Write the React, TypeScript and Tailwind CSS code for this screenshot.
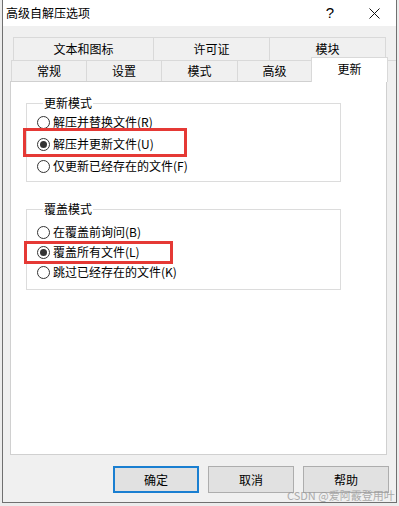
import React from "react";

const font = { fontFamily: '"Noto Sans CJK SC", "Noto Sans", sans-serif' };

function Radio({ label, checked, h }: { label: string; checked?: boolean; h: string }) {
  return (
    <div className={`flex items-center ${h}`}>
      <span className="w-[13px] h-[13px] rounded-full border border-[#333333] bg-white flex items-center justify-center">
        {checked && <span className="w-[7px] h-[7px] rounded-full bg-[#333333]" />}
      </span>
      <span className="ml-[3px] text-[12px] leading-[16px] text-black">{label}</span>
    </div>
  );
}

export default function App() {
  return (
    <div className="relative w-[399px] h-[506px] bg-[#ececec] overflow-hidden" style={font}>
      <div className="ml-[2px] w-[395px] h-[503px] border-x border-b border-[#707070] bg-[#f0f0f0] flex flex-col">
        {/* Title bar */}
        <div className="h-[26px] bg-white flex items-center pl-[3px] text-[12px] leading-[16px] text-black">
          <span>高级自解压选项</span>
          <span className="ml-auto text-[15px] leading-[18px] mr-[35px]" style={{ fontFamily: '"Liberation Sans", sans-serif' }}>?</span>
          <svg width="11" height="11" viewBox="0 0 11 11" className="mr-[16px]">
            <path d="M0.5 0.5 L10.5 10.5 M10.5 0.5 L0.5 10.5" stroke="#111" strokeWidth="1" />
          </svg>
        </div>

        {/* Tabs */}
        <div className="pt-[11px] text-[12px] leading-[16px] text-black">
          <div className="flex ml-[10px] h-[23px]">
            <div className="w-[140px] border-l border-t border-[#d9d9d9] flex items-center justify-center">文本和图标</div>
            <div className="w-[116px] border-l border-t border-[#d9d9d9] flex items-center justify-center">许可证</div>
            <div className="w-[117px] border-l border-t border-r border-[#d9d9d9] flex items-center justify-center">模块</div>
          </div>
          <div className="flex items-end ml-[8px] h-[21px] border-t border-[#d9d9d9]">
            <div className="w-[75px] h-[20px] border-l border-[#d9d9d9] flex items-center justify-center">常规</div>
            <div className="w-[75px] h-[20px] border-l border-[#d9d9d9] flex items-center justify-center">设置</div>
            <div className="w-[76px] h-[20px] border-l border-[#d9d9d9] flex items-center justify-center">模式</div>
            <div className="w-[74px] h-[20px] border-l border-[#d9d9d9] flex items-center justify-center">高级</div>
            <div className="relative z-10 w-[77px] h-[25px] -mb-px bg-white border-l border-t border-r border-[#d9d9d9] flex items-start justify-center pt-[3px]">更新</div>
          </div>

          {/* Panel */}
          <div className="relative ml-[7px] w-[377px] h-[374px] bg-white border border-[#d0d0d0]">
            <fieldset className="ml-[15px] mt-[13px] w-[315px] border border-[#dcdcdc] pb-[4px] pl-[10px]">
              <legend className="ml-[6px] px-[1px] text-[12px] leading-[16px]">更新模式</legend>
              <Radio h="h-[22px]" label="解压并替换文件(R)" />
              <Radio h="h-[22px]" label="解压并更新文件(U)" checked />
              <Radio h="h-[22px]" label="仅更新已经存在的文件(F)" />
            </fieldset>
            <fieldset className="ml-[15px] mt-[19px] w-[315px] border border-[#dcdcdc] pt-[5px] pb-[7px] pl-[10px]">
              <legend className="ml-[6px] px-[1px] text-[12px] leading-[16px]">覆盖模式</legend>
              <Radio h="h-[20px]" label="在覆盖前询问(B)" />
              <Radio h="h-[20px]" label="覆盖所有文件(L)" checked />
              <Radio h="h-[20px]" label="跳过已经存在的文件(K)" />
            </fieldset>

            <div className="absolute left-[12px] top-[46px] w-[164px] h-[29px] border-[3px] border-[#e53935]" />
            <div className="absolute left-[13px] top-[159px] w-[149px] h-[23px] border-[3px] border-[#e53935]" />
          </div>

          {/* Buttons */}
          <div className="flex justify-end gap-[9px] pr-[7px] mt-[11px]">
            <div className="w-[86px] h-[27px] bg-[#e1e1e1] border-2 border-[#1a7fd1] flex items-center justify-center">确定</div>
            <div className="w-[86px] h-[27px] bg-[#e1e1e1] border border-[#adadad] flex items-center justify-center">取消</div>
            <div className="w-[86px] h-[27px] bg-[#e1e1e1] border border-[#adadad] flex items-center justify-center">帮助</div>
          </div>
        </div>
      </div>

      <div className="absolute left-[287px] top-[489px] text-[11px] leading-[13px] text-[#9a9a9a] opacity-80 whitespace-nowrap">
        CSDN @爱阿霰登用叶
      </div>
    </div>
  );
}
